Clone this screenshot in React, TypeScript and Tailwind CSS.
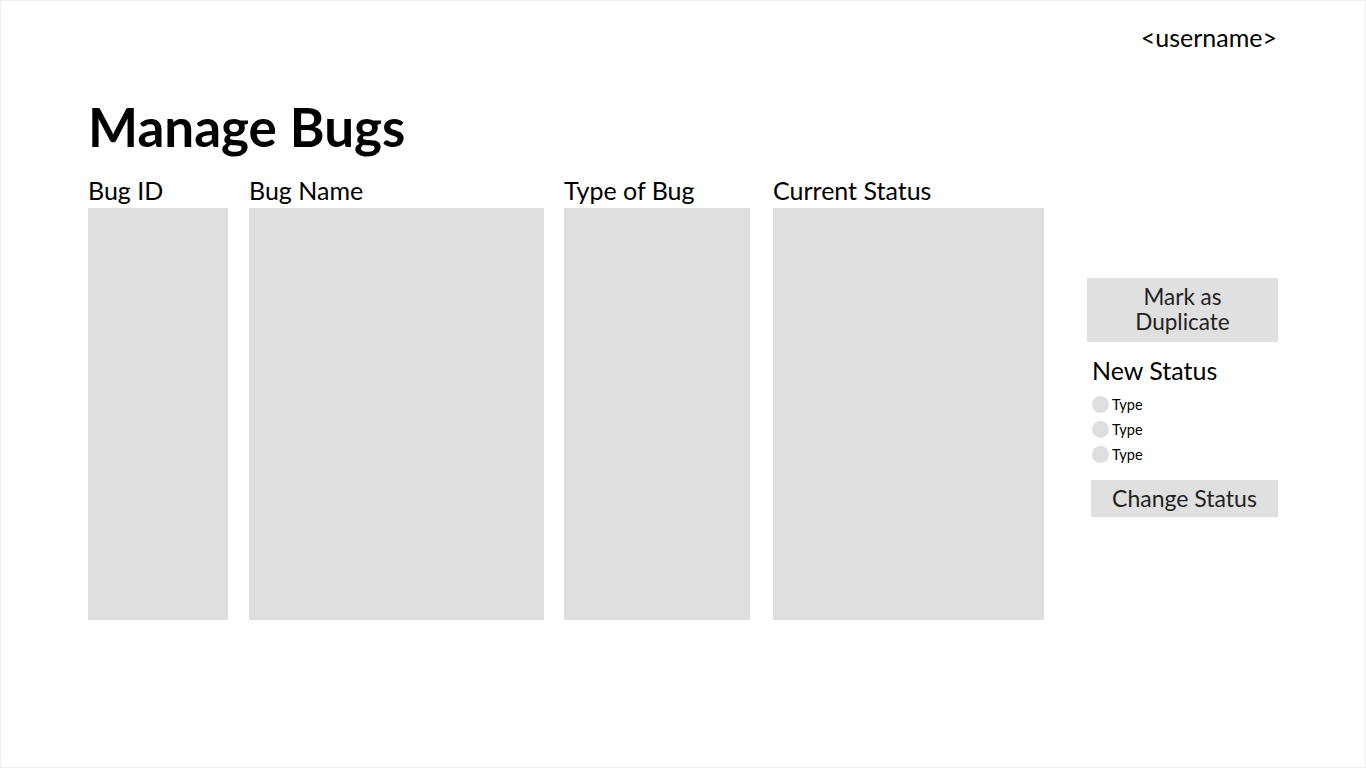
import React from 'react';

const columns = [
  { label: 'Bug ID', className: 'w-[140px]' },
  { label: 'Bug Name', className: 'w-[295px] ml-[21px]' },
  { label: 'Type of Bug', className: 'w-[186px] ml-[20px]' },
  { label: 'Current Status', className: 'w-[271px] ml-[23px]' },
];

export default function App() {
  return (
    <div className="w-[1366px] h-[768px] bg-white border border-[#f0f0f0] text-black font-['Lato',sans-serif] overflow-hidden">
      {/* Top bar */}
      <div className="flex justify-end pr-[88px] pt-[21px]">
        <span className="text-[25px] leading-[30px]">&lt;username&gt;</span>
      </div>

      <div className="pl-[87px]">
        <h1 className="mt-[45px] text-[53px] leading-[60px] font-bold">Manage Bugs</h1>

        <div className="flex mt-[19px]">
          {/* Table columns */}
          <div className="flex">
            {columns.map(col => (
              <div key={col.label} className={`${col.className} flex flex-col`}>
                <span className="text-[25px] leading-[28px] mb-[4px] whitespace-nowrap">{col.label}</span>
                <div className="h-[412px] bg-[#dedede]" />
              </div>
            ))}
          </div>

          {/* Side panel */}
          <div className="ml-[43px] mt-[102px] w-[191px] flex flex-col">
            <button className="h-[64px] pb-[3px] bg-[#e0e0e0] text-[22.5px] leading-[25px] text-[#222]">
              Mark as<br />Duplicate
            </button>
            <span className="mt-[13px] ml-[5px] text-[25px] leading-[30px]">New Status</span>
            <div className="mt-[11px] ml-[5px] flex flex-col gap-[8px]">
              {['Type', 'Type', 'Type'].map((t, i) => (
                <label key={i} className="flex items-center gap-[3px]">
                  <span className="w-[17px] h-[17px] rounded-full bg-[#dedede]" />
                  <span className="text-[14.5px] leading-[17px]">{t}</span>
                </label>
              ))}
            </div>
            <button className="mt-[17px] ml-[4px] h-[37px] bg-[#e0e0e0] text-[23px] leading-[25px] text-[#222]">
              Change Status
            </button>
          </div>
        </div>
      </div>
    </div>
  );
}
